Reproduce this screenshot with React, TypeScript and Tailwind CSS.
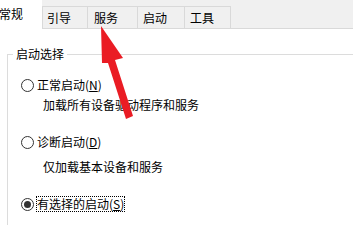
const tabs = [
  { label: '引导', cls: 'w-[45px] pl-[4px]' },
  { label: '服务', cls: 'w-[50px] pl-[6px]' },
  { label: '启动', cls: 'w-[47px] pl-[5px]' },
  { label: '工具', cls: 'w-[47px] pl-[5px] border-r' },
]

function Radio({ checked }: { checked?: boolean }) {
  return (
    <span className="flex h-[13px] w-[13px] shrink-0 items-center justify-center rounded-full border border-[#333]">
      {checked && <span className="h-[7px] w-[7px] rounded-full bg-[#333]" />}
    </span>
  )
}

export default function App() {
  return (
    <div
      className="relative h-[225px] w-[353px] overflow-hidden bg-white text-[12px] text-black"
      style={{ fontFamily: '"Noto Sans CJK SC", "Noto Sans", sans-serif' }}
    >
      {/* Tab strip */}
      <div className="flex h-[29px] bg-[#f0f0f0]">
        <div className="flex h-[29px] w-[42px] items-center bg-white pb-[1px] leading-[22px]">
          <span className="-ml-[1px]">常规</span>
        </div>
        <div className="flex flex-1 items-end border-b border-[#d9d9d9]">
          {tabs.map((t) => (
            <div
              key={t.label}
              className={`h-[22px] ${t.cls} border-l border-t border-[#d9d9d9] bg-[#f0f0f0] leading-[22px]`}
            >
              {t.label}
            </div>
          ))}
        </div>
      </div>

      {/* Group box */}
      <fieldset className="ml-[7px] mt-[17px] h-[200px] border-l border-t border-[#dcdcdc]">
        <legend className="ml-[5px] px-[3px] leading-[16px]">启动选择</legend>

        <div className="mt-[14px] flex h-[18px] items-center pl-[13px]">
          <Radio />
          <span className="ml-[3px] leading-[18px]">
            正常启动(<u>N</u>)
          </span>
        </div>
        <div className="mt-[2px] h-[18px] pl-[35px] leading-[18px]">加载所有设备驱动程序和服务</div>

        <div className="mt-[19px] flex h-[18px] items-center pl-[13px]">
          <Radio />
          <span className="ml-[3px] leading-[18px]">
            诊断启动(<u>D</u>)
          </span>
        </div>
        <div className="mt-[7px] h-[18px] pl-[35px] leading-[18px]">仅加载基本设备和服务</div>

        <div className="mt-[19px] flex h-[18px] items-center pl-[13px]">
          <Radio checked />
          <span className="ml-[2px] border border-dotted border-black px-0 leading-[14px]">
            有选择的启动(<u>S</u>)
          </span>
        </div>
      </fieldset>

      {/* Red arrow annotation */}
      <svg className="pointer-events-none absolute left-0 top-0" width="353" height="225" viewBox="0 0 353 225">
        <polygon
          points="101,26 123,58 115,60 133,116 126,119 108,63 102,63"
          fill="#ea1c24"
        />
      </svg>
    </div>
  )
}
